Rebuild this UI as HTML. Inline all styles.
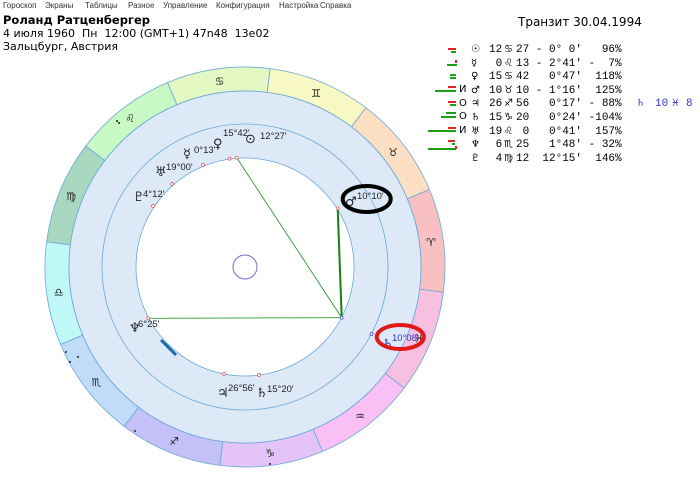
<!DOCTYPE html>
<html><head><meta charset="utf-8"><style>
body{margin:0;width:700px;height:482px;background:#fff;position:relative;overflow:hidden;font-family:"DejaVu Sans","Liberation Sans",sans-serif;color:#000}
.m{position:absolute;top:1px;font-size:8px;color:#333;font-family:"Liberation Sans",sans-serif}
.t{position:absolute;white-space:pre;font-family:"Liberation Mono","DejaVu Sans Mono",monospace;font-size:11px;line-height:12px}
.s{position:absolute;font-family:"DejaVu Sans",sans-serif;font-size:10px;line-height:12px}
.b{position:absolute;height:2px}
.g{background:#1ca01c}.r{background:#e82020}
</style></head><body>
<div class="m" style="left:3px">Гороскоп</div>
<div class="m" style="left:45px">Экраны</div>
<div class="m" style="left:85px">Таблицы</div>
<div class="m" style="left:128px">Разное</div>
<div class="m" style="left:163px">Управление</div>
<div class="m" style="left:216px">Конфигурация</div>
<div class="m" style="left:279px">Настройка</div>
<div class="m" style="left:320px">Справка</div>
<div style="position:absolute;left:3px;top:13px;font-size:11.5px;font-weight:bold">Роланд Ратценбергер</div>
<div style="position:absolute;left:3px;top:27px;font-size:11px">4 июля 1960&nbsp; Пн&nbsp; 12:00 (GMT+1) 47n48&nbsp; 13e02</div>
<div style="position:absolute;left:3px;top:40px;font-size:11px">Зальцбург, Австрия</div>
<div style="position:absolute;left:518px;top:15px;font-size:12px">Транзит 30.04.1994</div>

<div class="b r" style="left:448px;top:48px;width:8px"></div><div class="b g" style="left:451px;top:51px;width:5px"></div>
<div class="b r" style="left:455px;top:60px;width:2px;height:3px"></div><div class="b g" style="left:447px;top:64px;width:10px"></div>
<div class="b g" style="left:450px;top:74px;width:6px"></div><div class="b g" style="left:450px;top:77px;width:6px"></div>
<div class="b r" style="left:448px;top:86px;width:8px"></div><div class="b g" style="left:435px;top:90px;width:21px"></div>
<div class="b r" style="left:448px;top:101px;width:8px"></div><div class="b g" style="left:450px;top:104px;width:6px"></div>
<div class="b g" style="left:446px;top:112px;width:10px"></div><div class="b g" style="left:441px;top:116px;width:15px"></div>
<div class="b r" style="left:448px;top:127px;width:8px"></div><div class="b g" style="left:428px;top:130px;width:28px"></div>
<div class="b r" style="left:448px;top:140px;width:7px"></div><div class="b g" style="left:452px;top:143px;width:3px"></div>
<div class="b g" style="left:428px;top:148px;width:28px"></div><div class="b r" style="left:455px;top:146px;width:2px;height:3px"></div>

<div class="s" style="left:459px;top:84px">И</div>
<div class="s" style="left:459px;top:98px">О</div>
<div class="s" style="left:459px;top:111px">О</div>
<div class="s" style="left:459px;top:125px">И</div>

<div class="s" style="left:471px;top:44px">☉</div><div class="t" style="left:489px;top:44px">12</div><div class="s" style="left:504px;top:44px">♋</div><div class="t" style="left:516px;top:44px">27 - 0° 0'   96%</div>
<div class="s" style="left:471px;top:58px">☿</div><div class="t" style="left:489px;top:58px"> 0</div><div class="s" style="left:504px;top:58px">♌</div><div class="t" style="left:516px;top:58px">13 - 2°41' -  7%</div>
<div class="s" style="left:471px;top:71px">♀</div><div class="t" style="left:489px;top:71px">15</div><div class="s" style="left:504px;top:71px">♋</div><div class="t" style="left:516px;top:71px">42   0°47'  118%</div>
<div class="s" style="left:471px;top:85px">♂</div><div class="t" style="left:489px;top:85px">10</div><div class="s" style="left:504px;top:85px">♉</div><div class="t" style="left:516px;top:85px">10 - 1°16'  125%</div>
<div class="s" style="left:471px;top:98px">♃</div><div class="t" style="left:489px;top:98px">26</div><div class="s" style="left:504px;top:98px">♐</div><div class="t" style="left:516px;top:98px">56   0°17' - 88%</div>
<div class="s" style="left:471px;top:112px">♄</div><div class="t" style="left:489px;top:112px">15</div><div class="s" style="left:504px;top:112px">♑</div><div class="t" style="left:516px;top:112px">20   0°24' -104%</div>
<div class="s" style="left:471px;top:126px">♅</div><div class="t" style="left:489px;top:126px">19</div><div class="s" style="left:504px;top:126px">♌</div><div class="t" style="left:516px;top:126px"> 0   0°41'  157%</div>
<div class="s" style="left:471px;top:139px">♆</div><div class="t" style="left:489px;top:139px"> 6</div><div class="s" style="left:504px;top:139px">♏</div><div class="t" style="left:516px;top:139px">25   1°48' - 32%</div>
<div class="s" style="left:471px;top:153px">♇</div><div class="t" style="left:489px;top:153px"> 4</div><div class="s" style="left:504px;top:153px">♍</div><div class="t" style="left:516px;top:153px">12  12°15'  146%</div>

<div class="s" style="left:636px;top:98px;color:#3333dd">♄</div><div class="t" style="left:655px;top:98px;color:#3333dd">10</div><div class="s" style="left:671px;top:98px;color:#3333dd">♓</div><div class="t" style="left:686px;top:98px;color:#3333dd">8</div>

<svg style="position:absolute;left:0;top:0" width="700" height="482">
<g stroke="#6aa8d8" stroke-width="0.8">
<path d="M429.4,189.5 A200,200 0 0 0 365.9,107.7 L351.4,126.8 A176,176 0 0 1 407.3,198.8Z" fill="#fde0c4"/>
<path d="M365.9,107.7 A200,200 0 0 0 270.1,68.6 L267.1,92.4 A176,176 0 0 1 351.4,126.8Z" fill="#f8f8c4"/>
<path d="M270.1,68.6 A200,200 0 0 0 167.5,82.6 L176.8,104.7 A176,176 0 0 1 267.1,92.4Z" fill="#e4f8c4"/>
<path d="M167.5,82.6 A200,200 0 0 0 85.7,146.1 L104.8,160.6 A176,176 0 0 1 176.8,104.7Z" fill="#c8f8c4"/>
<path d="M85.7,146.1 A200,200 0 0 0 46.6,241.9 L70.4,245.0 A176,176 0 0 1 104.8,160.6Z" fill="#a8d8c0"/>
<path d="M46.6,241.9 A200,200 0 0 0 60.6,344.5 L82.7,335.2 A176,176 0 0 1 70.4,245.0Z" fill="#c0f8f8"/>
<path d="M60.6,344.5 A200,200 0 0 0 124.1,426.3 L138.6,407.2 A176,176 0 0 1 82.7,335.2Z" fill="#c0dcf8"/>
<path d="M124.1,426.3 A200,200 0 0 0 219.9,465.4 L222.9,441.6 A176,176 0 0 1 138.6,407.2Z" fill="#c4c0f8"/>
<path d="M219.9,465.4 A200,200 0 0 0 322.5,451.4 L313.2,429.3 A176,176 0 0 1 222.9,441.6Z" fill="#e4c4f8"/>
<path d="M322.5,451.4 A200,200 0 0 0 404.3,387.9 L385.2,373.4 A176,176 0 0 1 313.2,429.3Z" fill="#f8c0f4"/>
<path d="M404.3,387.9 A200,200 0 0 0 443.4,292.1 L419.6,289.1 A176,176 0 0 1 385.2,373.4Z" fill="#f8c0e0"/>
<path d="M443.4,292.1 A200,200 0 0 0 429.4,189.5 L407.3,198.8 A176,176 0 0 1 419.6,289.1Z" fill="#f8c0c0"/>
</g>
<circle cx="245" cy="267" r="176" fill="#dde9f7" stroke="#6aa8d8" stroke-width="0.8"/>
<circle cx="245" cy="267" r="143" fill="none" stroke="#6aa8d8" stroke-width="0.8"/>
<circle cx="245" cy="267" r="109" fill="#fff" stroke="#6aa8d8" stroke-width="0.8"/>
<circle cx="245" cy="267" r="12" fill="none" stroke="#7070d0" stroke-width="1"/>
<g stroke="#2a9a2a" stroke-width="0.9">
<line x1="236.7" y1="157.7" x2="341.7" y2="317.7"/>
<line x1="148.3" y1="318.3" x2="341.7" y2="317.7"/>
<line x1="337.7" y1="208.3" x2="341.7" y2="317.7" stroke="#168016" stroke-width="2"/>
</g>
<line x1="161" y1="340" x2="176" y2="355" stroke="#1a6ab0" stroke-width="3"/>
<g fill="#fff" stroke="#e05050" stroke-width="0.7">
<circle cx="236.7" cy="157.7" r="1.5"/><circle cx="229.5" cy="158.7" r="1.5"/><circle cx="203" cy="165" r="1.5"/><circle cx="172" cy="184" r="1.5"/><circle cx="153" cy="206" r="1.5"/><circle cx="337.7" cy="208.3" r="1.5"/><circle cx="148.3" cy="318.3" r="1.5"/><circle cx="224" cy="374" r="1.5"/><circle cx="259" cy="375" r="1.5"/>
</g>
<circle cx="341.7" cy="317.7" r="1.5" fill="#fff" stroke="#4040e0" stroke-width="0.7"/>
<circle cx="371.5" cy="334" r="1.5" fill="#fff" stroke="#4040e0" stroke-width="0.7"/>
<g font-family="DejaVu Sans,sans-serif" font-size="11" text-anchor="middle" fill="#222">
<text x="431" y="246">♈</text><text x="393" y="156">♉</text><text x="316" y="97">♊</text><text x="219.5" y="85">♋</text><text x="130" y="122">♌</text><text x="71" y="200">♍</text><text x="58.7" y="296">♎</text><text x="96.4" y="386">♏</text><text x="174" y="445">♐</text><text x="270" y="457">♑</text><text x="360" y="420">♒</text><text x="419" y="342">♓</text>
</g>
<g fill="#222"><circle cx="117" cy="121" r="1"/><circle cx="119" cy="123" r="1"/><circle cx="66" cy="352" r="1"/><circle cx="78" cy="357" r="1"/><circle cx="70" cy="362" r="1"/><circle cx="135" cy="431" r="1"/><circle cx="270" cy="464" r="1"/></g>
<g font-family="DejaVu Sans,sans-serif" font-size="13" fill="#222">
<text x="245" y="143">⊙</text><text x="213" y="148">♀</text><text x="183" y="158">☿</text><text x="155" y="176">♅</text><text x="133" y="201">♇</text><text x="345" y="206">♂</text><text x="129" y="332">♆</text><text x="217" y="397">♃</text><text x="256" y="397">♄</text><text x="382" y="348" fill="#3333cc">♄</text>
</g>
<g font-family="Liberation Sans,sans-serif" font-size="9.5" fill="#222">
<text x="260" y="139">12°27'</text>
<text x="223" y="136">15°42'</text>
<text x="194" y="153">0°13'</text>
<text x="166" y="170">19°00'</text>
<text x="143" y="197">4°12'</text>
<text x="357" y="199">10°10'</text>
<text x="138" y="327">6°25'</text>
<text x="228" y="391">26°56'</text>
<text x="267" y="392">15°20'</text>
<text x="392" y="341" fill="#3333cc">10°08'</text>
</g>
<ellipse cx="366.7" cy="199" rx="24" ry="13" fill="none" stroke="#000" stroke-width="4"/>
<ellipse cx="400.3" cy="337" rx="23.5" ry="12" fill="none" stroke="#e01818" stroke-width="4"/>
</svg>
</body></html>
